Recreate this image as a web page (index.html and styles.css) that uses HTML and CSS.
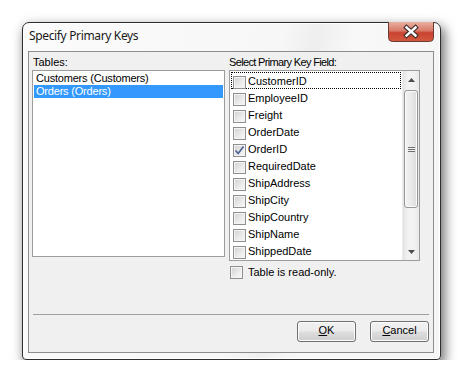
FILE: index.html
```html
<!DOCTYPE html>
<html>
<head>
<meta charset="utf-8">
<link rel="stylesheet" href="styles.css">
</head>
<body>
<div class="stage">
  <div class="window">
    <div class="titlebar">Specify Primary Keys</div>
    <div class="close">
      <svg width="46" height="20" viewBox="0 0 46 20">
        <defs>
          <linearGradient id="cg" x1="0" y1="0" x2="0" y2="1">
            <stop offset="0" stop-color="#eab0a2"/>
            <stop offset="0.45" stop-color="#d97a68"/>
            <stop offset="0.55" stop-color="#c8432f"/>
            <stop offset="1" stop-color="#d35a3e"/>
          </linearGradient>
        </defs>
        <path d="M0.5 0 V15.5 Q0.5 19.5 4.5 19.5 H41.5 Q45.5 19.5 45.5 15.5 V0" fill="url(#cg)" stroke="#6b3a34"/>
        <path d="M18.5 5.5 L27.5 13.5 M27.5 5.5 L18.5 13.5" stroke="#3b2b2b" stroke-width="4.6" stroke-linecap="square"/>
        <path d="M18.5 5.5 L27.5 13.5 M27.5 5.5 L18.5 13.5" stroke="#ffffff" stroke-width="2.4" stroke-linecap="square"/>
      </svg>
    </div>
    <div class="client">
      <div class="panes">
        <div class="col col-left">
          <div class="label">Tables:</div>
          <div class="listbox">
            <div class="item">Customers (Customers)</div>
            <div class="item selected">Orders (Orders)</div>
          </div>
        </div>
        <div class="col col-right">
          <div class="label label-right">Select Primary Key Field:</div>
          <div class="checklist">
            <div class="rows">
              <div class="row focused"><span class="cb"></span><span>CustomerID</span></div>
              <div class="row"><span class="cb"></span><span>EmployeeID</span></div>
              <div class="row"><span class="cb"></span><span>Freight</span></div>
              <div class="row"><span class="cb"></span><span>OrderDate</span></div>
              <div class="row"><span class="cb checked"><svg width="11" height="11" viewBox="0 0 11 11"><path d="M1.5 5.5 L4.2 8.5 L9.5 1.5" fill="none" stroke="#4d6396" stroke-width="1.7"/></svg></span><span>OrderID</span></div>
              <div class="row"><span class="cb"></span><span>RequiredDate</span></div>
              <div class="row"><span class="cb"></span><span>ShipAddress</span></div>
              <div class="row"><span class="cb"></span><span>ShipCity</span></div>
              <div class="row"><span class="cb"></span><span>ShipCountry</span></div>
              <div class="row"><span class="cb"></span><span>ShipName</span></div>
              <div class="row"><span class="cb"></span><span>ShippedDate</span></div>
            </div>
            <div class="scrollbar">
              <div class="arrow up"><svg width="7" height="4" viewBox="0 0 7 4"><path d="M0 4 L3.5 0 L7 4 Z" fill="#4d4d4d"/></svg></div>
              <div class="track">
                <div class="thumb"><span class="grip"></span></div>
              </div>
              <div class="arrow down"><svg width="7" height="4" viewBox="0 0 7 4"><path d="M0 0 L3.5 4 L7 0 Z" fill="#4d4d4d"/></svg></div>
            </div>
          </div>
        </div>
      </div>
      <div class="readonly"><span class="cb"></span><span>Table is read-only.</span></div>
      <div class="spacer"></div>
      <div class="separator"></div>
      <div class="footer">
        <div class="btn"><span class="u">O</span>K</div>
        <div class="btn"><span class="u">C</span>ancel</div>
      </div>
    </div>
  </div>
</div>
</body>
</html>
```

FILE: styles.css
```css
html, body {
  margin: 0;
  padding: 0;
  background: #ffffff;
}
body {
  font-family: "Liberation Sans", Arial, sans-serif;
  font-size: 11px;
  color: #000;
}
.stage {
  padding: 22px 0 0 22px;
}
.window {
  position: relative;
  width: 406px;
  height: 330px;
  border: 1px solid #2e2e2e;
  border-radius: 7px 7px 4px 4px;
  background: linear-gradient(100deg, #fbfbfb 0%, #f7f7f7 55%, #eeeeee 62%, #f8f8f8 70%, #f5f5f5 100%);
  box-shadow: inset 0 0 0 1px #ffffff, 3px 5px 12px 1px rgba(0, 0, 0, 0.55);
  padding: 0 6px 6px 5px;
  box-sizing: content-box;
  display: flex;
  flex-direction: column;
}
.titlebar {
  height: 23px;
  padding: 5px 0 0 1px;
  font-family: "Noto Sans", "Open Sans", sans-serif;
  font-size: 12px;
  line-height: 16px;
  color: #1a1a1a;
  letter-spacing: -0.35px;
}
.close {
  position: absolute;
  top: -1px;
  left: 365px;
  width: 46px;
  height: 20px;
  line-height: 0;
}
.client {
  flex: 1;
  border: 1px solid #8d8d8d;
  background: #f0f0f0;
  display: flex;
  flex-direction: column;
}
.panes {
  display: flex;
  padding-left: 3px;
}
.col-left {
  width: 193px;
}
.col-right {
  width: 191px;
  margin-left: 4px;
}
.label {
  margin-top: 4px;
  margin-bottom: 1px;
  line-height: 13px;
  height: 13px;
  padding-left: 1px;
  white-space: nowrap;
}
.label-right {
  padding-left: 0;
  letter-spacing: -0.65px;
}
.listbox {
  height: 184px;
  border: 1px solid #9c9c9c;
  background: #fff;
  padding: 1px 1px 0 1px;
}
.item {
  line-height: 13px;
  height: 13px;
  padding-left: 2px;
  white-space: nowrap;
  letter-spacing: -0.2px;
}
.item.selected {
  background: #3399ff;
  color: #fff;
}
.checklist {
  height: 189px;
  border: 1px solid #9c9c9c;
  background: #fff;
  display: flex;
}
.rows {
  flex: 1;
  padding: 1px 1px 0 1px;
}
.row {
  height: 17px;
  box-sizing: border-box;
  display: flex;
  align-items: flex-start;
  white-space: nowrap;
  border: 1px solid transparent;
}
.row span:last-child {
  line-height: 13px;
  padding-top: 2px;
  margin-left: 2px;
}
.row.focused {
  border: 1px dotted #000;
}
.cb {
  width: 11px;
  height: 11px;
  flex: none;
  border: 1px solid #8e8f8f;
  background: linear-gradient(135deg, #d0d0d0 0%, #ececec 60%, #f8f8f8 100%);
  box-shadow: inset 0 0 0 1px #f4f4f4;
  margin: 3px 0 0 1px;
  display: flex;
  align-items: center;
  justify-content: center;
  line-height: 0;
}
.cb.checked svg {
  display: block;
}
.scrollbar {
  width: 17px;
  flex: none;
  display: flex;
  flex-direction: column;
  background: linear-gradient(90deg, #e3e3e3 0%, #f2f2f2 30%, #f2f2f2 70%, #e8e8e8 100%);
  border-left: 1px solid #ececec;
  box-sizing: border-box;
}
.arrow {
  height: 17px;
  display: flex;
  align-items: center;
  justify-content: center;
  line-height: 0;
}
.track {
  flex: 1;
  padding: 2px 1px 0 1px;
}
.thumb {
  height: 116px;
  border: 1px solid #979797;
  border-radius: 3px;
  background: linear-gradient(90deg, #f2f2f2 0%, #eaeaea 50%, #dcdcdc 100%);
  box-shadow: inset 0 0 0 1px #fbfbfb;
  display: flex;
  align-items: center;
  justify-content: center;
}
.grip {
  width: 7px;
  height: 5px;
  background: repeating-linear-gradient(180deg, #6d6d6d 0, #6d6d6d 1px, #f4f4f4 1px, #f4f4f4 2px);
}
.readonly {
  display: flex;
  align-items: flex-start;
  margin-top: 5px;
  margin-left: 200px;
  height: 13px;
}
.readonly .cb {
  margin: 0 0 0 1px;
}
.readonly span:last-child {
  margin-left: 5px;
  line-height: 13px;
}
.spacer {
  flex: 1;
}
.separator {
  height: 1px;
  margin: 0 4px 0 4px;
  background: #a0a0a0;
}
.footer {
  display: flex;
  justify-content: flex-end;
  gap: 14px;
  padding: 6px 4px 10px 4px;
}
.btn {
  width: 57px;
  height: 19px;
  border: 1px solid #707070;
  border-radius: 3px;
  background: linear-gradient(180deg, #f2f2f2 0%, #ebebeb 48%, #dddddd 52%, #cfcfcf 100%);
  box-shadow: inset 0 0 0 1px #fcfcfc;
  text-align: center;
  line-height: 17px;
}
.u {
  text-decoration: underline;
}
```
